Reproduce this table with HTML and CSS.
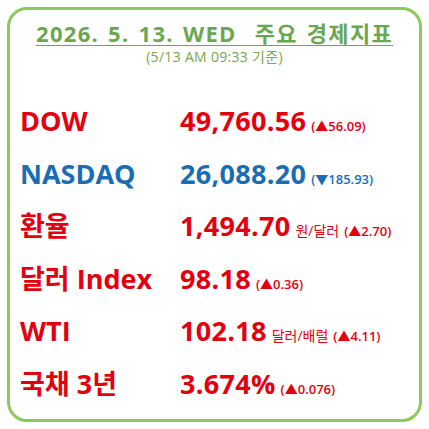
FILE: index.html
```html
<!DOCTYPE html>
<html lang="ko">
<head>
<meta charset="utf-8">
<link rel="stylesheet" href="styles.css">
</head>
<body>
<div class="card">
  <div class="head">
    <div class="title">2026. 5. 13. WED&nbsp; 주요 경제지표</div>
    <div class="sub">(5/13 AM 09:33 기준)</div>
  </div>
  <div class="rows">
    <div class="row red"><div class="label">DOW</div><div class="val"><span class="num">49,760.56</span><span class="chg">(▲56.09)</span></div></div>
    <div class="row blue"><div class="label">NASDAQ</div><div class="val"><span class="num">26,088.20</span><span class="chg">(▼185.93)</span></div></div>
    <div class="row red"><div class="label">환율</div><div class="val"><span class="num">1,494.70</span><span class="unit">원/달러</span><span class="chg">(▲2.70)</span></div></div>
    <div class="row red"><div class="label">달러 Index</div><div class="val"><span class="num">98.18</span><span class="chg">(▲0.36)</span></div></div>
    <div class="row red"><div class="label">WTI</div><div class="val"><span class="num">102.18</span><span class="unit">달러/배럴</span><span class="chg">(▲4.11)</span></div></div>
    <div class="row red"><div class="label">국채 3년</div><div class="val"><span class="num">3.674%</span><span class="chg">(▲0.076)</span></div></div>
  </div>
</div>
</body>
</html>
```

FILE: styles.css
```css
html, body {
  margin: 0;
  padding: 0;
  background: #ffffff;
}
body {
  font-family: "Open Sans", "Noto Sans CJK KR", sans-serif;
  width: 429px;
  height: 429px;
}
.card {
  box-sizing: border-box;
  margin: 7px 0 0 7px;
  width: 415px;
  height: 415px;
  border: 3px solid #8cc85c;
  border-radius: 20px;
  padding: 10px 0 0 0;
}
.head {
  display: flex;
  flex-direction: column;
  align-items: center;
}
.title {
  font-size: 22px;
  font-weight: 700;
  letter-spacing: 1.3px;
  word-spacing: 2px;
  color: #6aa84f;
  text-decoration: underline;
  text-decoration-thickness: 1px;
  text-underline-offset: 3px;
  line-height: 26px;
}
.sub {
  font-size: 14px;
  letter-spacing: 0.3px;
  color: #7aa84a;
  line-height: 16px;
  margin-top: 3px;
}
.rows {
  margin-top: 30px;
  padding-left: 10px;
  display: flex;
  flex-direction: column;
}
.row {
  display: grid;
  grid-template-columns: 160px 1fr;
  align-items: baseline;
  height: 52.6px;
  line-height: 52px;
}
.red { color: #e3000f; }
.blue { color: #1a6db3; }
.label, .num {
  font-size: 27px;
  font-weight: 700;
}
.num { letter-spacing: 0.3px; }
.val {
  display: flex;
  align-items: baseline;
  gap: 5px;
}
.unit {
  font-size: 14px;
}
.chg {
  font-size: 13px;
  font-weight: 600;
}
```
